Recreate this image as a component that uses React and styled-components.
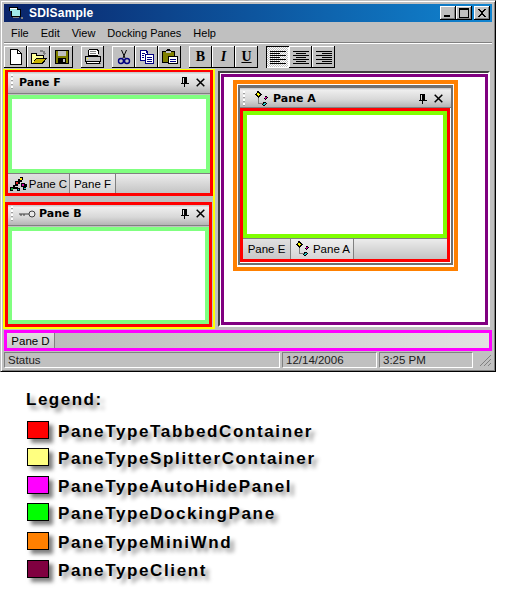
import React from 'react';
import styled, { createGlobalStyle } from 'styled-components';

const Global = createGlobalStyle`
  * { box-sizing: border-box; }
  html, body { margin: 0; background: #fff; }
  body { font-family: "Liberation Sans", Arial, sans-serif; }
`;

const AppIcon = () => (
  <svg width="16" height="16" viewBox="0 0 16 16" shapeRendering="crispEdges">
    <path d="M1 2h9v2h3v8H3V6H1z" fill="#000" />
    <path d="M2 3h7v2h3v6H4V6H2z" fill="#9fe8e8" />
    <path d="M2 3h7v1H2z" fill="#fff" />
    <path d="M13 12h2v2h-2zM5 12h6v1H5z" fill="#808080" />
  </svg>
);

const Minimize = () => (
  <svg width="10" height="10" viewBox="0 0 10 10" shapeRendering="crispEdges">
    <path d="M1 7h6v2H1z" fill="#000" />
  </svg>
);
const Maximize = () => (
  <svg width="10" height="10" viewBox="0 0 10 10" shapeRendering="crispEdges">
    <path d="M0 0h10v10H0zM1 2v7h8V2z" fill="#000" fillRule="evenodd" />
  </svg>
);
const CloseCaption = () => (
  <svg width="10" height="10" viewBox="0 0 10 10" shapeRendering="crispEdges">
    <path d="M1 1h2v1h1v1h2V2h1V1h2v1H8v1H7v1H6v2h1v1h1v1h1v1H7V8H6V7H4v1H3v1H1V8h1V7h1V6h1V4H3V3H2V2H1z" fill="#000" />
  </svg>
);

const NewIcon = () => (
  <svg width="16" height="16" viewBox="0 0 16 16" shapeRendering="crispEdges">
    <path d="M2 0h8v1h1v1h1v1h1v1h1v12H2z" fill="#000" />
    <path d="M3 1h6v4h4v10H3z" fill="#fff" />
    <path d="M10 2h1v1h1v1h-2z" fill="#fff" />
  </svg>
);
const OpenIcon = () => (
  <svg width="18" height="16" viewBox="0 0 18 16" shapeRendering="crispEdges">
    <path d="M1 4h6v2h7v3h3l-4 6H1z" fill="#000" />
    <path d="M2 5h4v2h7v2H6l-3 5H2z" fill="#ffff99" />
    <path d="M6 10h9l-3 4H3z" fill="#c8b400" />
    <path d="M10 1h3v1h2v2h1l-2 2-2-2h1V3h-3z" fill="#808080" />
  </svg>
);
const SaveIcon = () => (
  <svg width="16" height="16" viewBox="0 0 16 16" shapeRendering="crispEdges">
    <path d="M1 1h14v14H1z" fill="#000" />
    <path d="M2 2h12v12H2z" fill="#808000" />
    <path d="M4 2h8v5H4z" fill="#c0c0c0" />
    <path d="M4 9h8v5H4z" fill="#000" />
    <path d="M9 10h2v3H9z" fill="#c0c0c0" />
  </svg>
);
const PrintIcon = () => (
  <svg width="18" height="16" viewBox="0 0 18 16" shapeRendering="crispEdges">
    <path d="M5 0h9v1h1v4h-1v2h3v6h-1v2H2v-2H1V7h3V1h1z" fill="#000" />
    <path d="M5 1h8v1h1v4H5z" fill="#fff" />
    <path d="M6 2h6v1H6zM6 4h6v1H6z" fill="#808080" />
    <path d="M2 8h14v4H2z" fill="#c0c0c0" />
    <path d="M3 13h12v1H3z" fill="#fff" />
    <path d="M3 9h1v1H3z" fill="#ffff00" />
    <path d="M16 14h1v1h-1z" fill="#808080" />
  </svg>
);
const CutIcon = () => (
  <svg width="16" height="16" viewBox="0 0 16 16" fill="none">
    <path d="M5.5 1l3.5 8M10.5 1L7 9" stroke="#000" strokeWidth="1" />
    <circle cx="5" cy="12" r="2.5" stroke="#000080" strokeWidth="1.4" />
    <circle cx="11" cy="12" r="2.5" stroke="#000080" strokeWidth="1.4" />
  </svg>
);
const CopyIcon = () => (
  <svg width="16" height="16" viewBox="0 0 16 16" shapeRendering="crispEdges">
    <path d="M1 1h7v1h1v3h6v10H6v-3H1z" fill="#000080" />
    <path d="M2 2h5v2h1v1H6v6H2z" fill="#fff" />
    <path d="M7 6h7v8H7z" fill="#fff" />
    <path d="M3 4h3v1H3zM3 6h2v1H3zM3 8h2v1H3zM8 8h5v1H8zM8 10h5v1H8zM8 12h5v1H8z" fill="#000080" />
  </svg>
);
const PasteIcon = () => (
  <svg width="18" height="16" viewBox="0 0 18 16" shapeRendering="crispEdges">
    <path d="M1 2h4V1h1V0h3v1h1v1h4v5h3v8H7v-1H1z" fill="#000" />
    <path d="M2 3h11v4H7v6H2z" fill="#808000" />
    <path d="M5 2h5v2H5z" fill="#c0c0c0" />
    <path d="M8 8h8v6H8z" fill="#fff" />
    <path d="M9 10h6v1H9zM9 12h6v1H9z" fill="#000080" />
  </svg>
);

const AlignIcon = ({ lines }) => (
  <svg width="16" height="15" viewBox="0 0 16 15" shapeRendering="crispEdges">
    {lines.map(([x, w], i) => (
      <rect key={i} x={x} y={1 + i * 2} width={w} height="1" fill="#000" />
    ))}
  </svg>
);

const Pin = () => (
  <svg width="8" height="10" viewBox="0 0 8 10" shapeRendering="crispEdges">
    <path d="M1 0h5v6h2v1H4v3H3V7H0V6h1zM2 1v5h1V1z" fill="#000" fillRule="evenodd" />
  </svg>
);
const PaneClose = () => (
  <svg width="9" height="9" viewBox="0 0 9 9" fill="none">
    <path d="M0.7 0.7l7.6 7.6M8.3 0.7L0.7 8.3" stroke="#000" strokeWidth="1.5" />
  </svg>
);

const DiamondIcon = () => (
  <svg width="17" height="16" viewBox="0 0 17 16" shapeRendering="crispEdges">
    <path d="M5 7h1v5h4v1H5z" fill="#808080" />
    <path d="M4 0h2v1h1v1h1v1h1v1H8v1H7v1H6v1H5V6H4V5H3V4H2V3h1V2h1z" fill="#000" />
    <path d="M4 2h2v1h1v1H6v1H5V4H4V3H3z" fill="#ffff00" />
    <path d="M12 5h2v1h1v1h-1v1h-1v1h-1V8h-1V7h1z" fill="#000" />
    <path d="M12 6h2v1h-1v1h-1z" fill="#d000a0" />
    <path d="M10 11h3v1h1v1h-1v1h-1v1h-2v-1H9v-1h1z" fill="#000" />
    <path d="M11 12h2v1h-1v1h-2v-1h1z" fill="#20c8c8" />
  </svg>
);
const PinsIcon = () => (
  <svg width="17" height="14" viewBox="0 0 17 14" shapeRendering="crispEdges">
    <path d="M0 10h3V8h2v2h3v1h2v3H7v-2H3v2H0z" fill="#000" />
    <path d="M1 11h2v2H1z" fill="#10a030" />
    <path d="M8 12h1v1H8z" fill="#20c8c8" />
    <path d="M5 4h3V2h2V0h3v3h-1v2h-2v2H8v2H5z" fill="#000" />
    <path d="M6 5h2v2H6z" fill="#e02020" />
    <path d="M10 1h2v2h-2z" fill="#ffe000" />
    <path d="M11 6h4v1h2v3h-2v1h-2v-1h-2z" fill="#000" />
    <path d="M12 7h2v2h-2z" fill="#d000a0" />
    <path d="M13 10h3v3h-3z" fill="#000" />
    <path d="M14 11h2v1h-2z" fill="#20c8c8" />
  </svg>
);
const KeyIcon = () => (
  <svg width="17" height="8" viewBox="0 0 17 8" fill="none">
    <path d="M0 4h10M2 4v2M5 4v2" stroke="#404040" strokeWidth="1" />
    <circle cx="13" cy="4" r="3" stroke="#404040" strokeWidth="1" fill="#e8e8e8" />
  </svg>
);

const Window = styled.div`
  width: 496px;
  height: 372px;
  padding: 3px;
  display: flex;
  flex-direction: column;
  background: #c0c0c0;
  border: 1px solid #c0c0c0;
  border-right-color: #000;
  border-bottom-color: #000;
  box-shadow: inset 1px 1px 0 #fff, inset -1px -1px 0 #808080;
`;

const TitleBar = styled.div`
  height: 18px;
  display: flex;
  align-items: center;
  padding: 0 2px 0 4px;
  background: linear-gradient(90deg, #0a246a, #1084d0);
  color: #fff;
`;

const Caption = styled.span`
  flex: 1;
  margin-left: 5px;
  font: bold 12px "Liberation Sans", Arial, sans-serif;
  letter-spacing: 0.2px;
`;

const CaptionButton = styled.button`
  width: 16px;
  height: 14px;
  padding: 0;
  display: flex;
  align-items: center;
  justify-content: center;
  margin-left: ${(p) => (p.$gap ? '2px' : 0)};
  background: #c0c0c0;
  border: 0;
  box-shadow: inset -1px -1px 0 #000, inset 1px 1px 0 #fff, inset -2px -2px 0 #808080;
`;

const MenuBar = styled.div`
  height: 20px;
  display: flex;
  align-items: center;
  padding: 1px 0 0 7px;
  gap: 12px;
  font-size: 11px;
  color: #000;
`;

const ToolBar = styled.div`
  height: 27px;
  display: flex;
  align-items: flex-start;
  padding: 3px 0 0 0;
  border-top: 1px solid #808080;
  box-shadow: inset 0 1px 0 #fff;
`;

const ToolGroup = styled.div`
  display: flex;
  margin-right: 8px;
`;

const ToolButton = styled.button`
  width: 23px;
  height: 22px;
  padding: 0;
  display: flex;
  align-items: center;
  justify-content: center;
  border: 0;
  background: #c0c0c0;
  color: #000;
  font: bold 14px "Liberation Serif", serif;
  box-shadow: inset -1px -1px 0 #000, inset 1px 1px 0 #fff;
  ${(p) =>
    p.$pressed &&
    `
    background: repeating-conic-gradient(#fff 0 25%, #c0c0c0 0 50%) 0 0 / 2px 2px;
    box-shadow: inset 1px 1px 0 #000, inset -1px -1px 0 #fff;
  `}
`;

const DockArea = styled.div`
  height: 261px;
  display: flex;
  align-items: flex-start;
  gap: 3px;
`;

const LeftColumn = styled.div`
  width: 212px;
  height: 260px;
  margin-left: -1px;
  display: flex;
  flex-direction: column;
  gap: 6px;
  border: 2px solid #ffff00;
  border-top-width: 1px;
`;

const Pane = styled.div`
  width: ${(p) => p.$width}px;
  height: ${(p) => p.$height}px;
  display: flex;
  flex-direction: column;
  border: 3px solid #ff0000;
  border-top-width: ${(p) => p.$top || 3}px;
`;

const PaneTitle = styled.div`
  height: ${(p) => p.$height || 22}px;
  flex: none;
  display: flex;
  align-items: center;
  padding: ${(p) => p.$drop || 0}px ${(p) => p.$right || 5}px ${(p) => p.$lift || 0}px 3px;
  gap: 3px;
  font: bold 11px "DejaVu Sans", sans-serif;
  color: #000;
  background: linear-gradient(#c4c4c4, #eeeeee 12%, #d8d8d8 60%, #b4b4b4);
  border-bottom: 1px solid #808080;
`;

const Gripper = styled.span`
  width: 2px;
  height: 16px;
  margin-right: ${(p) => p.$gap}px;
  background: repeating-linear-gradient(#fff 0 2px, #a0a0a0 2px 3px, transparent 3px 4px);
`;

const PaneLabel = styled.span`
  flex: 1;
`;

const PaneTools = styled.span`
  display: flex;
  align-items: center;
  gap: 7px;
`;

const DockBody = styled.div`
  flex: 1;
  margin-top: ${(p) => p.$top || 0}px;
  background: #fff;
  border: 4px solid ${(p) => p.$color};
`;

const TabStrip = styled.div`
  height: ${(p) => p.$height}px;
  flex: none;
  display: flex;
  background: linear-gradient(#ececec, #c4c4c4);
  border-top: 1px solid #808080;
`;

const Tab = styled.div`
  width: ${(p) => p.$width}px;
  flex: none;
  display: flex;
  align-items: center;
  justify-content: center;
  gap: 2px;
  font-size: 11.5px;
  white-space: nowrap;
  color: #000;
  border-right: 1px solid #808080;
  background: ${(p) => (p.$active ? 'linear-gradient(#f0f0f0, #d4d4d4)' : 'linear-gradient(#e0e0e0, #c8c8c8)')};
`;

const ClientFrame = styled.div`
  width: 272px;
  height: 256px;
  margin-top: 2px;
  padding: 1px 0 0 1px;
  background: #fff;
  border: 2px solid;
  border-color: #404040 #fff #fff #404040;
`;

const Client = styled.div`
  height: 100%;
  padding: 3px 0 0 9px;
  background: #fff;
  border: 3px solid #800080;
`;

const MiniWnd = styled.div`
  width: 225px;
  height: 191px;
  padding: 1px 1px 2px 1px;
  background: #fff;
  border: 4px solid #ff8000;
`;

const MiniInner = styled.div`
  height: 100%;
  display: flex;
  flex-direction: column;
  border: 2px solid #707070;
  border-top-width: 3px;
`;

const AutoHide = styled.div`
  height: 21px;
  flex: none;
  display: flex;
  border: 3px solid #ff00ff;
  background: linear-gradient(90deg, #b8b8b8, #e2e2e2);
`;

const StatusBar = styled.div`
  height: 16px;
  margin-top: 1px;
  display: flex;
  font-size: 11.5px;
  color: #202020;
`;

const StatusPane = styled.div`
  width: ${(p) => p.$width}px;
  margin-right: ${(p) => p.$gap}px;
  padding-left: 3px;
  line-height: 15px;
  border: 1px solid;
  border-color: #808080 #fff #fff #808080;
`;

const SizeGrip = styled.svg`
  margin-left: 5px;
`;

const Legend = styled.section`
  padding: 18px 0 0 26px;
`;

const LegendTitle = styled.h2`
  margin: 0 0 11px;
  height: 20px;
  font: bold 17px/20px "Liberation Sans", Arial, sans-serif;
  letter-spacing: 1.5px;
  color: #000;
  text-shadow: 4px 4px 4px rgba(0, 0, 0, 0.45);
`;

const LegendRow = styled.div`
  height: ${(p) => p.$height}px;
  display: flex;
  align-items: flex-start;
  padding-left: 1px;
  gap: 9px;
`;

const Swatch = styled.span`
  width: 22px;
  height: 18px;
  background: ${(p) => p.$color};
  border: 1px solid #000;
  box-shadow: 4px 4px 4px rgba(0, 0, 0, 0.5);
`;

const LegendLabel = styled.span`
  margin-top: 1px;
  font: bold 17px/20px "Liberation Sans", Arial, sans-serif;
  letter-spacing: 1.63px;
  color: #000;
  text-shadow: 4px 4px 4px rgba(0, 0, 0, 0.45);
`;

const legend = [
  ['PaneTypeTabbedContainer', '#ff0000', 27],
  ['PaneTypeSplitterContainer', '#ffff80', 28],
  ['PaneTypeAutoHidePanel', '#ff00ff', 27],
  ['PaneTypeDockingPane', '#00ff00', 29],
  ['PaneTypeMiniWnd', '#ff8000', 28],
  ['PaneTypeClient', '#800040', 28],
];

const left = [[0, 16], [0, 10], [0, 16], [0, 10], [0, 16], [0, 10], [0, 16]];
const center = [[0, 16], [3, 10], [0, 16], [3, 10], [0, 16], [3, 10], [0, 16]];
const right = [[0, 16], [6, 10], [0, 16], [6, 10], [0, 16], [6, 10], [0, 16]];

const Tools = () => (
  <PaneTools>
    <Pin />
    <PaneClose />
  </PaneTools>
);

export default function App() {
  return (
    <>
      <Global />
      <Window>
        <TitleBar>
          <AppIcon />
          <Caption>SDISample</Caption>
          <CaptionButton><Minimize /></CaptionButton>
          <CaptionButton><Maximize /></CaptionButton>
          <CaptionButton $gap><CloseCaption /></CaptionButton>
        </TitleBar>
        <MenuBar>
          <span>File</span>
          <span>Edit</span>
          <span>View</span>
          <span>Docking Panes</span>
          <span>Help</span>
        </MenuBar>
        <ToolBar>
          <ToolGroup>
            <ToolButton><NewIcon /></ToolButton>
            <ToolButton><OpenIcon /></ToolButton>
            <ToolButton><SaveIcon /></ToolButton>
          </ToolGroup>
          <ToolGroup>
            <ToolButton><PrintIcon /></ToolButton>
          </ToolGroup>
          <ToolGroup>
            <ToolButton><CutIcon /></ToolButton>
            <ToolButton><CopyIcon /></ToolButton>
            <ToolButton><PasteIcon /></ToolButton>
          </ToolGroup>
          <ToolGroup>
            <ToolButton>B</ToolButton>
            <ToolButton><i>I</i></ToolButton>
            <ToolButton><u>U</u></ToolButton>
          </ToolGroup>
          <ToolGroup>
            <ToolButton $pressed><AlignIcon lines={left} /></ToolButton>
            <ToolButton><AlignIcon lines={center} /></ToolButton>
            <ToolButton><AlignIcon lines={right} /></ToolButton>
          </ToolGroup>
        </ToolBar>
        <DockArea>
          <LeftColumn>
            <Pane $width={208} $height={126} $top={2}>
              <PaneTitle $lift={1}>
                <Gripper $gap={3} />
                <PaneLabel>Pane F</PaneLabel>
                <Tools />
              </PaneTitle>
              <DockBody $color="#80ff80" $top={1} />
              <TabStrip $height={20}>
                <Tab $width={62}><PinsIcon />Pane C</Tab>
                <Tab $width={46} $active>Pane F</Tab>
              </TabStrip>
            </Pane>
            <Pane $width={207} $height={125}>
              <PaneTitle $height={21} $lift={3} $right={4}>
                <Gripper $gap={3} />
                <KeyIcon />
                <PaneLabel>Pane B</PaneLabel>
                <Tools />
              </PaneTitle>
              <DockBody $color="#80ff80" $top={1} />
            </Pane>
          </LeftColumn>
          <ClientFrame>
            <Client>
              <MiniWnd>
                <MiniInner>
                  <PaneTitle $height={20} $drop={2} $right={8}>
                    <Gripper $gap={5} />
                    <DiamondIcon />
                    <PaneLabel>Pane A</PaneLabel>
                    <Tools />
                  </PaneTitle>
                  <Pane $width={210} $height={154}>
                    <DockBody $color="#80ff00" />
                    <TabStrip $height={21}>
                      <Tab $width={48}>Pane E</Tab>
                      <Tab $width={63} $active><DiamondIcon />Pane A</Tab>
                    </TabStrip>
                  </Pane>
                </MiniInner>
              </MiniWnd>
            </Client>
          </ClientFrame>
        </DockArea>
        <AutoHide>
          <Tab $width={48}>Pane D</Tab>
        </AutoHide>
        <StatusBar>
          <StatusPane $width={276} $gap={2}>Status</StatusPane>
          <StatusPane $width={95} $gap={2}>12/14/2006</StatusPane>
          <StatusPane $width={94} $gap={0}>3:25 PM</StatusPane>
          <SizeGrip width="14" height="15" viewBox="0 0 14 15" shapeRendering="crispEdges">
            <path d="M12 3h1v1h-1zM11 4h1v1h-1zM10 5h1v1h-1zM9 6h1v1H9zM8 7h1v1H8zM7 8h1v1H7zM6 9h1v1H6zM5 10h1v1H5zM4 11h1v1H4zM3 12h1v1H3zM2 13h1v1H2z" fill="#808080" />
            <path d="M12 7h1v1h-1zM11 8h1v1h-1zM10 9h1v1h-1zM9 10h1v1H9zM8 11h1v1H8zM7 12h1v1H7zM6 13h1v1H6z" fill="#808080" />
            <path d="M12 11h1v1h-1zM11 12h1v1h-1zM10 13h1v1h-1z" fill="#808080" />
          </SizeGrip>
        </StatusBar>
      </Window>
      <Legend>
        <LegendTitle>Legend:</LegendTitle>
        {legend.map(([name, color, height]) => (
          <LegendRow key={name} $height={height}>
            <Swatch $color={color} />
            <LegendLabel>{name}</LegendLabel>
          </LegendRow>
        ))}
      </Legend>
    </>
  );
}
